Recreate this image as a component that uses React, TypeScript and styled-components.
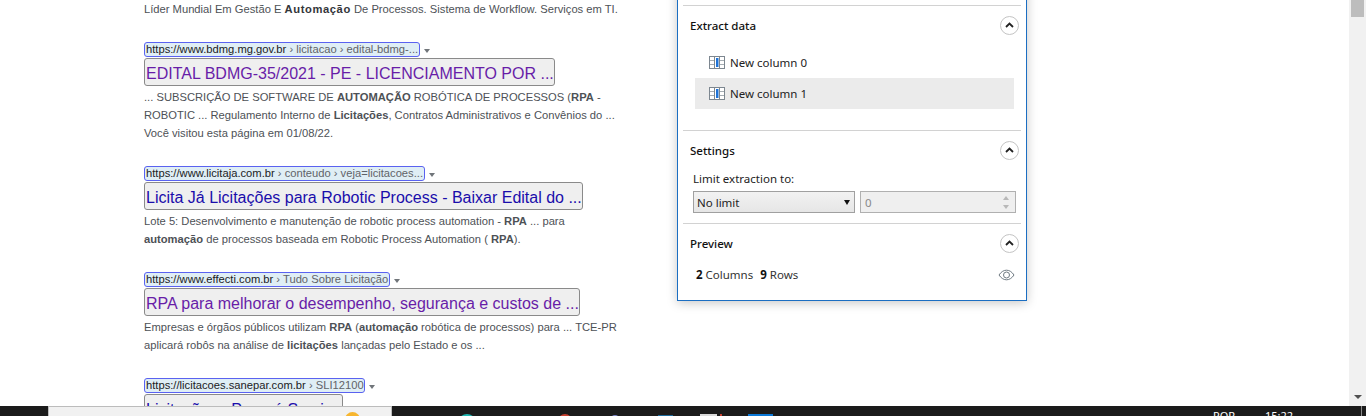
import React from 'react';
import styled, {createGlobalStyle} from 'styled-components';

interface Crumb {
  host: string;
  path: string;
  width: number;
}

interface Result {
  crumb: Crumb;
  title: string;
  titleWidth: number;
  visited?: boolean;
  lines: React.ReactNode[];
}

const GlobalStyle = createGlobalStyle`
  html, body {
    margin: 0;
    padding: 0;
    width: 1366px;
    height: 416px;
    overflow: hidden;
    background: #fff;
  }
`;

const Screen = styled.div`
  position: relative;
  width: 1366px;
  height: 416px;
  overflow: hidden;
  display: flex;
  flex-direction: column;
  background: #fff;
`;

const Content = styled.div`
  flex: 1;
  min-height: 0;
  overflow: hidden;
  padding-left: 144px;
`;

const Snippet = styled.div`
  font: 11.2px/18px 'Liberation Sans', Arial, sans-serif;
  color: #4d5156;
  white-space: nowrap;

  b {
    color: #4d5156;
  }
`;

const TopSnippet = styled(Snippet)`
  margin-bottom: 24px;

  b {
    color: #33363a;
    letter-spacing: 0.6px;
  }
`;

const ResultBlock = styled.div`
  margin-bottom: 24px;
`;

const CrumbRow = styled.div`
  display: flex;
  align-items: center;
  height: 15px;
`;

const CrumbLink = styled.div<{$width: number}>`
  box-sizing: border-box;
  width: ${p => p.$width}px;
  height: 15px;
  border: 1px solid #5a62f0;
  border-radius: 3px;
  background: #dfeef5;
  padding-left: 1px;
  font: 11.2px/13px 'Liberation Sans', Arial, sans-serif;
  color: #5f6368;
  white-space: nowrap;
  overflow: hidden;

  span {
    color: #202124;
  }
`;

const CrumbArrow = styled.i`
  width: 0;
  height: 0;
  margin: 2px 0 0 4px;
  border-left: 3px solid transparent;
  border-right: 3px solid transparent;
  border-top: 4px solid #70757a;
`;

const TitleBox = styled.div<{$width: number; $visited?: boolean}>`
  box-sizing: border-box;
  width: ${p => p.$width}px;
  height: 28px;
  margin-top: 1px;
  border: 1px solid #8a8a8a;
  border-radius: 3px;
  background: #efefef;
  padding-left: 1px;
  font: 16px/30px 'Liberation Sans', Arial, sans-serif;
  color: ${p => (p.$visited ? '#681da8' : '#1a0dab')};
  white-space: nowrap;
  overflow: hidden;
`;

const ResultSnippet = styled(Snippet)`
  margin-top: 2px;
`;

const Panel = styled.section`
  position: absolute;
  left: 677px;
  top: -20px;
  box-sizing: border-box;
  width: 350px;
  height: 321px;
  padding: 0 5px;
  background: #fff;
  border: 1px solid #1b6ec2;
  box-shadow: 0 2px 10px rgba(0, 0, 0, 0.22);
  font-family: 'Noto Sans', 'Open Sans', sans-serif;
  color: #1a1a1a;
`;

const Section = styled.div<{$height: number; $top?: boolean}>`
  box-sizing: border-box;
  height: ${p => p.$height}px;
  margin-top: ${p => (p.$top ? 24 : 0)}px;
  border-top: 1px solid #d2d2d2;
  padding: 0 2px;
`;

const SectionHead = styled.div`
  display: flex;
  align-items: center;
  justify-content: space-between;
  height: 38px;
  padding: 0 0 0 5px;
`;

const SectionTitle = styled.h3`
  margin: 0;
  font-size: 11.5px;
  font-weight: 500;
  color: #111;
`;

const Collapse = styled.button`
  display: flex;
  align-items: center;
  justify-content: center;
  box-sizing: border-box;
  width: 19px;
  height: 19px;
  padding: 0;
  border: 1px solid #c4c4c4;
  border-radius: 50%;
  background: #fff;
`;

const ColumnList = styled.div`
  padding: 3px 0 0 10px;
`;

const ColumnRow = styled.div<{$selected?: boolean}>`
  display: flex;
  align-items: center;
  gap: 5px;
  width: 319px;
  height: 31px;
  box-sizing: border-box;
  padding-left: 14px;
  background: ${p => (p.$selected ? '#ebebeb' : 'transparent')};
  font-size: 11.5px;
  color: #222;
`;

const SettingsBody = styled.div`
  padding: 2px 0 0 8px;
`;

const FieldLabel = styled.div`
  font-size: 11.5px;
  line-height: 16px;
  color: #222;
  margin-bottom: 4px;
`;

const FieldRow = styled.div`
  display: flex;
  gap: 5px;
`;

const SelectBox = styled.div`
  box-sizing: border-box;
  display: flex;
  align-items: center;
  justify-content: space-between;
  width: 162px;
  height: 22px;
  padding: 0 4px 0 3px;
  border: 1px solid #a0a0a0;
  background: linear-gradient(#f2f2f2, #e6e6e6);
  font-size: 11.5px;
  color: #222;

  i {
    width: 0;
    height: 0;
    border-left: 3.5px solid transparent;
    border-right: 3.5px solid transparent;
    border-top: 5px solid #111;
  }
`;

const SpinBox = styled.div`
  box-sizing: border-box;
  display: flex;
  align-items: center;
  justify-content: space-between;
  width: 156px;
  height: 22px;
  padding: 0 6px 0 4px;
  border: 1px solid #b0b0b0;
  background: #efefef;
  font-size: 11.5px;
  color: #8a8a8a;
`;

const SpinArrows = styled.div`
  display: flex;
  flex-direction: column;
  gap: 5px;

  i {
    width: 0;
    height: 0;
    border-left: 3.5px solid transparent;
    border-right: 3.5px solid transparent;
  }
  i:first-child {
    border-bottom: 4px solid #b8b8b8;
  }
  i:last-child {
    border-top: 4px solid #b8b8b8;
  }
`;

const PreviewRow = styled.div`
  display: flex;
  align-items: center;
  justify-content: space-between;
  padding: 0 4px 0 11px;
  margin-top: 5px;
  font-size: 11.5px;
  color: #333;

  b {
    color: #111;
    font-weight: 700;
  }
`;

const Counts = styled.div`
  display: flex;
  gap: 7px;
`;

const Taskbar = styled.footer`
  position: relative;
  height: 10px;
  flex: none;
  background: #1b1b1b;
  display: flex;
  overflow: hidden;
`;

const SearchBox = styled.div`
  position: relative;
  box-sizing: border-box;
  width: 344px;
  height: 11px;
  margin-left: 48px;
  background: #f1f1f1;
  border: 1px solid #bcbcbc;
  border-bottom: 0;
`;

const Dot = styled.span<{$x: number; $color: string; $size: number; $top: number}>`
  position: absolute;
  left: ${p => p.$x}px;
  top: ${p => p.$top}px;
  width: ${p => p.$size}px;
  height: ${p => p.$size}px;
  border-radius: 50%;
  background: ${p => p.$color};
`;

const Square = styled.span<{$x: number; $color: string; $w: number; $top: number}>`
  position: absolute;
  left: ${p => p.$x}px;
  top: ${p => p.$top}px;
  width: ${p => p.$w}px;
  height: 10px;
  background: ${p => p.$color};
`;

const TrayText = styled.span<{$x: number}>`
  position: absolute;
  left: ${p => p.$x}px;
  top: 3px;
  font: 11px/14px 'Noto Sans', sans-serif;
  color: #fff;
`;

const Scrollbar = styled.div`
  position: absolute;
  right: 0;
  top: 0;
  bottom: 10px;
  width: 17px;
  background: #f1f1f1;
  display: flex;
  flex-direction: column;
  align-items: center;
  justify-content: space-between;
  padding-bottom: 7px;
  box-sizing: border-box;

  i {
    width: 0;
    height: 0;
    border-left: 4px solid transparent;
    border-right: 4px solid transparent;
    border-top: 4px solid #505050;
  }
`;

const ScrollThumb = styled.div`
  width: 13px;
  height: 17px;
  background: #bdbdbd;
`;

const results: Result[] = [
  {
    crumb: {host: 'https://www.bdmg.mg.gov.br', path: ' › licitacao › edital-bdmg-...', width: 276},
    title: 'EDITAL BDMG-35/2021 - PE - LICENCIAMENTO POR ...',
    titleWidth: 411,
    visited: true,
    lines: [
      <>... SUBSCRIÇÃO DE SOFTWARE DE <b>AUTOMAÇÃO</b> ROBÓTICA DE PROCESSOS (<b>RPA</b> -</>,
      <>ROBOTIC ... Regulamento Interno de <b>Licitações</b>, Contratos Administrativos e Convênios do ...</>,
      <>Você visitou esta página em 01/08/22.</>,
    ],
  },
  {
    crumb: {host: 'https://www.licitaja.com.br', path: ' › conteudo › veja=licitacoes...', width: 281},
    title: 'Licita Já Licitações para Robotic Process - Baixar Edital do ...',
    titleWidth: 439,
    lines: [
      <>Lote 5: Desenvolvimento e manutenção de robotic process automation - <b>RPA</b> ... para</>,
      <><b>automação</b> de processos baseada em Robotic Process Automation ( <b>RPA</b>).</>,
    ],
  },
  {
    crumb: {host: 'https://www.effecti.com.br', path: ' › Tudo Sobre Licitação', width: 246},
    title: 'RPA para melhorar o desempenho, segurança e custos de ...',
    titleWidth: 436,
    visited: true,
    lines: [
      <>Empresas e órgãos públicos utilizam <b>RPA</b> (<b>automação</b> robótica de processos) para ... TCE-PR</>,
      <>aplicará robôs na análise de <b>licitações</b> lançadas pelo Estado e os ...</>,
    ],
  },
  {
    crumb: {host: 'https://licitacoes.sanepar.com.br', path: ' › SLI12100', width: 221},
    title: 'Licitações - Paraná Serviços',
    titleWidth: 199,
    lines: [],
  },
];

// grey three-column grid with the middle column marked in blue
const ColumnIcon = () => (
  <svg width="16" height="13" viewBox="0 0 16 13">
    <rect x="0.5" y="0.5" width="15" height="12" fill="#fff" stroke="#7d8790" />
    <path d="M5.500 1v11M10.500 1v11" stroke="#7d8790" />
    <path d="M1 4.500h4M1 8.500h4M11 4.500h4M11 8.500h4" stroke="#a5adb3" />
    <rect x="7" y="2" width="2.500" height="9" fill="#1f74d8" />
  </svg>
);

const ChevronUp = () => (
  <svg width="9" height="6" viewBox="0 0 9 6">
    <path d="M1 5l3.500-3.500L8 5" fill="none" stroke="#222" strokeWidth="1.8" />
  </svg>
);

const EyeIcon = () => (
  <svg width="17" height="12" viewBox="0 0 17 12">
    <path d="M1 6c2-3 4.500-4.800 7.500-4.800S14 3 16 6c-2 3-4.500 4.800-7.500 4.800S3 9 1 6z" fill="none" stroke="#6f7a82" />
    <circle cx="8.500" cy="6" r="3" fill="none" stroke="#6f7a82" />
  </svg>
);

const App = () => {
  return (
    <Screen>
      <GlobalStyle />
      <Content>
        <TopSnippet>
          Líder Mundial Em Gestão E <b>Automação</b> De Processos. Sistema de Workflow. Serviços em TI.
        </TopSnippet>
        {results.map((r) => (
          <ResultBlock key={r.crumb.host}>
            <CrumbRow>
              <CrumbLink $width={r.crumb.width}>
                <span>{r.crumb.host}</span>{r.crumb.path}
              </CrumbLink>
              <CrumbArrow />
            </CrumbRow>
            <TitleBox $width={r.titleWidth} $visited={r.visited}>{r.title}</TitleBox>
            {r.lines.length > 0 && (
              <ResultSnippet>
                {r.lines.map((line, i) => <div key={i}>{line}</div>)}
              </ResultSnippet>
            )}
          </ResultBlock>
        ))}
      </Content>
      <Panel>
        <Section $height={125} $top>
          <SectionHead>
            <SectionTitle>Extract data</SectionTitle>
            <Collapse><ChevronUp /></Collapse>
          </SectionHead>
          <ColumnList>
            <ColumnRow><ColumnIcon />New column 0</ColumnRow>
            <ColumnRow $selected><ColumnIcon />New column 1</ColumnRow>
          </ColumnList>
        </Section>
        <Section $height={93}>
          <SectionHead>
            <SectionTitle>Settings</SectionTitle>
            <Collapse><ChevronUp /></Collapse>
          </SectionHead>
          <SettingsBody>
            <FieldLabel>Limit extraction to:</FieldLabel>
            <FieldRow>
              <SelectBox>No limit<i /></SelectBox>
              <SpinBox>0<SpinArrows><i /><i /></SpinArrows></SpinBox>
            </FieldRow>
          </SettingsBody>
        </Section>
        <Section $height={70}>
          <SectionHead>
            <SectionTitle>Preview</SectionTitle>
            <Collapse><ChevronUp /></Collapse>
          </SectionHead>
          <PreviewRow>
            <Counts>
              <span><b>2</b> Columns</span>
              <span><b>9</b> Rows</span>
            </Counts>
            <EyeIcon />
          </PreviewRow>
        </Section>
      </Panel>
      <Scrollbar><ScrollThumb /><i /></Scrollbar>
      <Taskbar>
        <SearchBox>
          <Dot $x={296} $top={5} $size={15} $color="#f7b62f" />
        </SearchBox>
        <Dot $x={458} $top={8} $size={18} $color="#1fb6b0" />
        <Dot $x={558} $top={8} $size={14} $color="#c8402f" />
        <Dot $x={611} $top={9} $size={8} $color="#7c86c8" />
        <Square $x={658} $top={9} $w={15} $color="#1b6a9c" />
        <Square $x={700} $top={8} $w={17} $color="#d9d9d9" />
        <Square $x={720} $top={8} $w={2} $color="#c8402f" />
        <Square $x={748} $top={8} $w={25} $color="#0a78d7" />
        <TrayText $x={1213}>POR</TrayText>
        <TrayText $x={1265}>15:22</TrayText>
        <Square $x={1361} $top={0} $w={1} $color="#8a8a8a" />
      </Taskbar>
    </Screen>
  );
};

export default App;
